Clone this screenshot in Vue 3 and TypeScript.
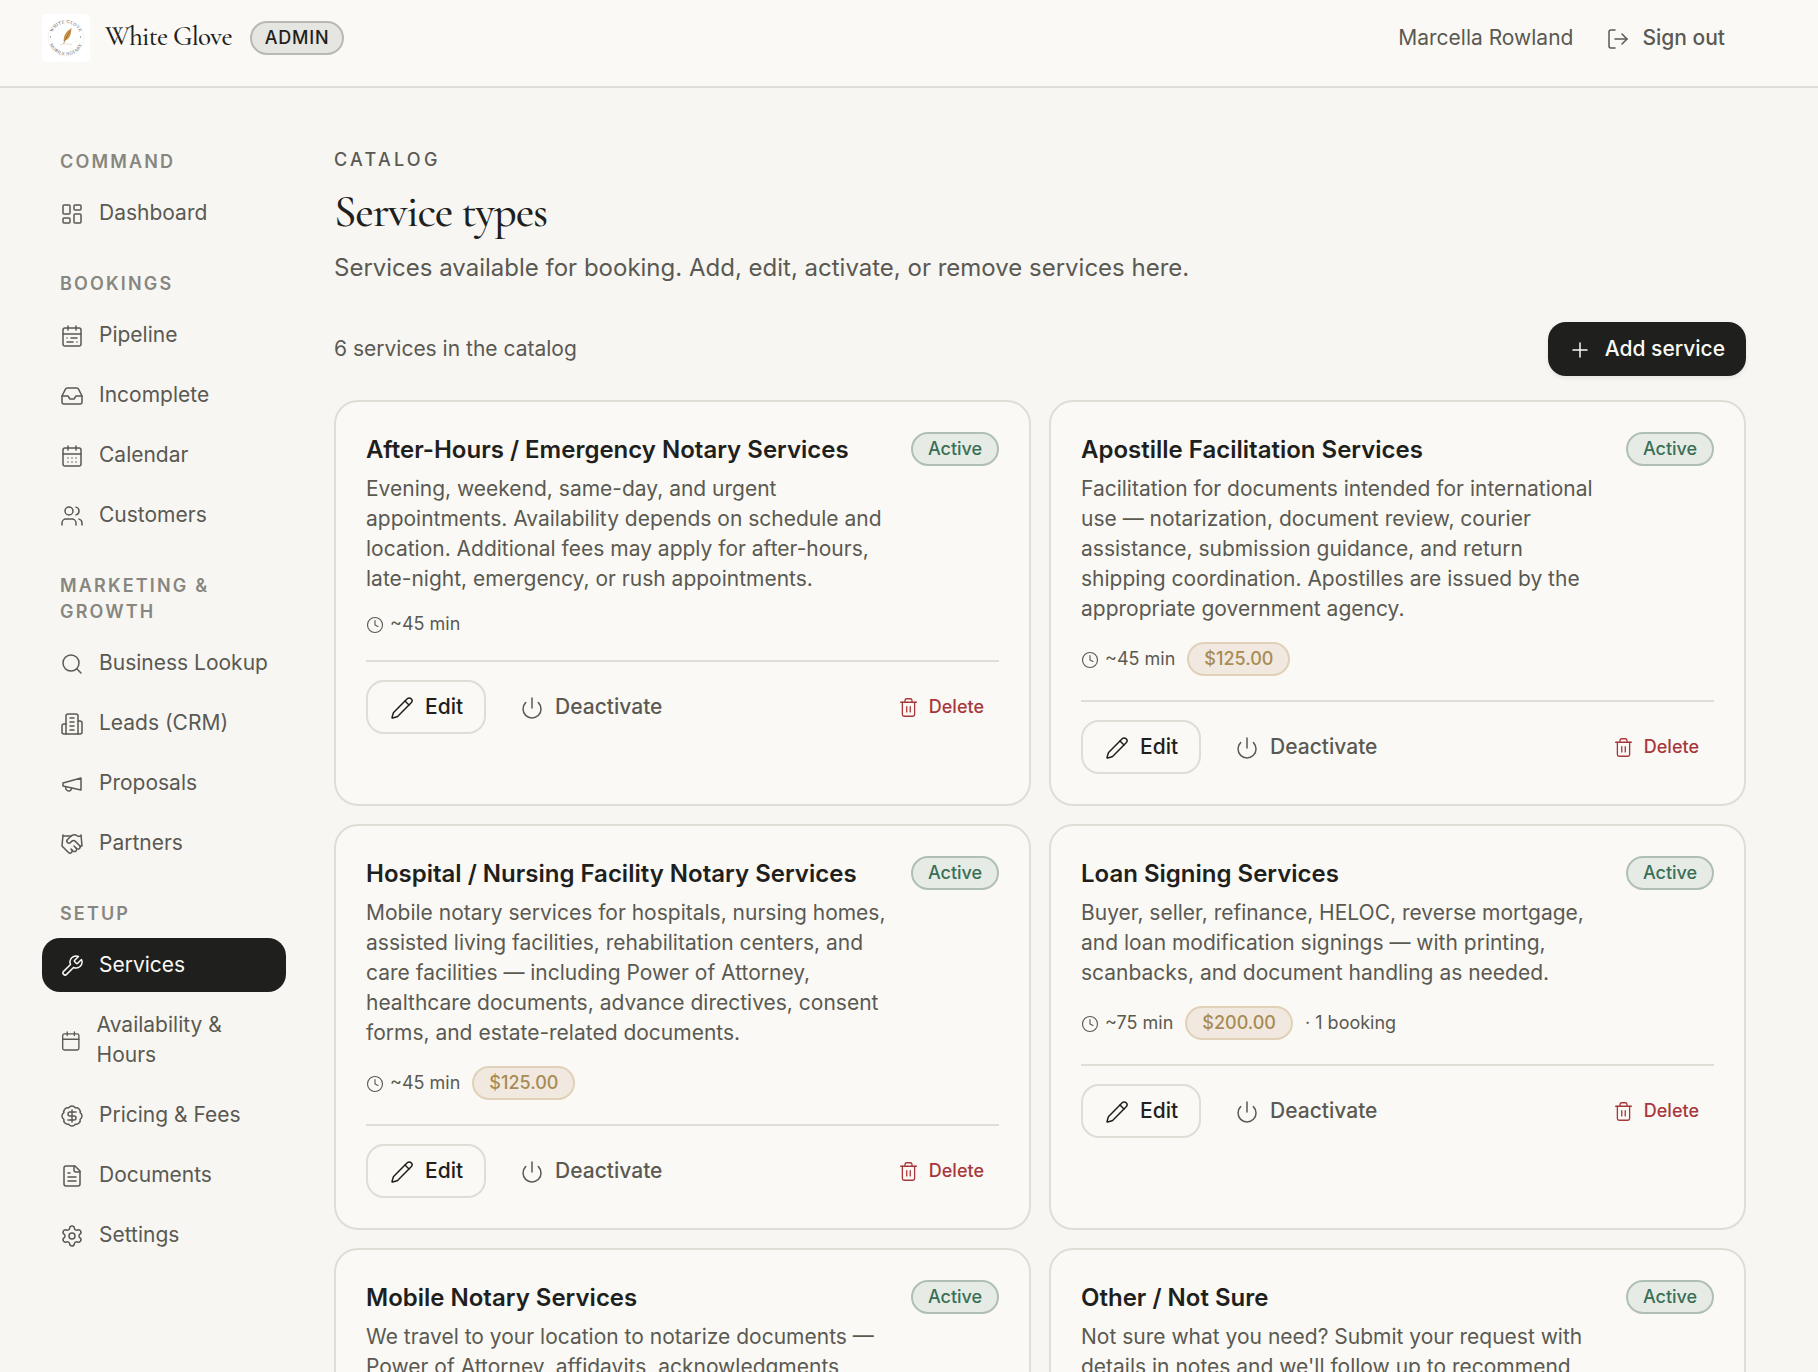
<script setup lang="ts">
interface NavItem {
  label: string
  icon: string
  active?: boolean
}
interface NavGroup {
  title: string
  items: NavItem[]
}
interface Service {
  name: string
  description: string
  duration: string
  price?: string
  bookings?: string
}

const calendarFrame =
  '<path d="M8 2v4"/><path d="M16 2v4"/><rect width="18" height="18" x="3" y="4" rx="2"/><path d="M3 10h18"/>'

const icons: Record<string, string> = {
  dashboard:
    '<rect width="7" height="9" x="3" y="3" rx="1"/><rect width="7" height="5" x="14" y="3" rx="1"/><rect width="7" height="9" x="14" y="12" rx="1"/><rect width="7" height="5" x="3" y="16" rx="1"/>',
  pipeline:
    calendarFrame + '<path d="M17 14h-6"/><path d="M13 18H7"/><path d="M7 14h.01"/><path d="M17 18h.01"/>',
  inbox:
    '<polyline points="22 12 16 12 14 15 10 15 8 12 2 12"/><path d="M5.45 5.11 2 12v6a2 2 0 0 0 2 2h16a2 2 0 0 0 2-2v-6l-3.45-6.89A2 2 0 0 0 16.76 4H7.24a2 2 0 0 0-1.79 1.11z"/>',
  calendarDays:
    calendarFrame +
    '<path d="M8 14h.01"/><path d="M12 14h.01"/><path d="M16 14h.01"/><path d="M8 18h.01"/><path d="M12 18h.01"/><path d="M16 18h.01"/>',
  calendar: calendarFrame,
  users:
    '<path d="M16 21v-2a4 4 0 0 0-4-4H6a4 4 0 0 0-4 4v2"/><circle cx="9" cy="7" r="4"/><path d="M22 21v-2a4 4 0 0 0-3-3.87"/><path d="M16 3.13a4 4 0 0 1 0 7.75"/>',
  search: '<circle cx="11" cy="11" r="8"/><path d="m21 21-4.3-4.3"/>',
  building:
    '<path d="M6 22V4a2 2 0 0 1 2-2h8a2 2 0 0 1 2 2v18Z"/><path d="M6 12H4a2 2 0 0 0-2 2v6a2 2 0 0 0 2 2h2"/><path d="M18 9h2a2 2 0 0 1 2 2v9a2 2 0 0 1-2 2h-2"/><path d="M10 6h4"/><path d="M10 10h4"/><path d="M10 14h4"/><path d="M10 18h4"/>',
  megaphone: '<path d="m3 11 18-5v12L3 14v-3z"/><path d="M11.6 16.8a3 3 0 1 1-5.8-1.6"/>',
  handshake:
    '<path d="m11 17 2 2a1 1 0 1 0 3-3"/><path d="m14 14 2.5 2.5a1 1 0 1 0 3-3l-3.88-3.88a3 3 0 0 0-4.24 0l-.88.88a1 1 0 1 1-3-3l2.81-2.81a5.79 5.79 0 0 1 7.06-.87l.47.28a2 2 0 0 0 1.42.25L21 4"/><path d="m21 3 1 11h-2"/><path d="M3 3 2 14l6.5 6.5a1 1 0 1 0 3-3"/><path d="M3 4h8"/>',
  wrench:
    '<path d="M14.7 6.3a1 1 0 0 0 0 1.4l1.6 1.6a1 1 0 0 0 1.4 0l3.77-3.77a6 6 0 0 1-7.94 7.94l-6.91 6.91a2.12 2.12 0 0 1-3-3l6.91-6.91a6 6 0 0 1 7.94-7.94l-3.76 3.76z"/>',
  dollar:
    '<path d="M3.85 8.62a4 4 0 0 1 4.78-4.77 4 4 0 0 1 6.74 0 4 4 0 0 1 4.78 4.78 4 4 0 0 1 0 6.74 4 4 0 0 1-4.77 4.78 4 4 0 0 1-6.75 0 4 4 0 0 1-4.78-4.77 4 4 0 0 1 0-6.76Z"/><path d="M16 8h-6a2 2 0 1 0 0 4h4a2 2 0 1 1 0 4H8"/><path d="M12 18V6"/>',
  file:
    '<path d="M15 2H6a2 2 0 0 0-2 2v16a2 2 0 0 0 2 2h12a2 2 0 0 0 2-2V7Z"/><path d="M14 2v4a2 2 0 0 0 2 2h4"/><path d="M10 9H8"/><path d="M16 13H8"/><path d="M16 17H8"/>',
  settings:
    '<path d="M9.671 4.136a2.34 2.34 0 0 1 4.659 0 2.34 2.34 0 0 0 3.319 1.915 2.34 2.34 0 0 1 2.33 4.033 2.34 2.34 0 0 0 0 3.831 2.34 2.34 0 0 1-2.33 4.033 2.34 2.34 0 0 0-3.319 1.915 2.34 2.34 0 0 1-4.659 0 2.34 2.34 0 0 0-3.32-1.915 2.34 2.34 0 0 1-2.33-4.033 2.34 2.34 0 0 0 0-3.831A2.34 2.34 0 0 1 6.35 6.051a2.34 2.34 0 0 0 3.319-1.915"/><circle cx="12" cy="12" r="3"/>',
  logout:
    '<path d="M9 21H5a2 2 0 0 1-2-2V5a2 2 0 0 1 2-2h4"/><path d="m16 17 5-5-5-5"/><path d="M21 12H9"/>',
  plus: '<path d="M5 12h14"/><path d="M12 5v14"/>',
  clock: '<circle cx="12" cy="12" r="10"/><path d="M12 6v6l4 2"/>',
  pencil:
    '<path d="M21.174 6.812a1 1 0 0 0-3.986-3.987L3.842 16.174a2 2 0 0 0-.5.83l-1.321 4.352a.5.5 0 0 0 .623.622l4.353-1.32a2 2 0 0 0 .83-.497z"/><path d="m15 5 4 4"/>',
  power: '<path d="M12 2v10"/><path d="M18.4 6.6a9 9 0 1 1-12.77.04"/>',
  trash:
    '<path d="M3 6h18"/><path d="M19 6v14a2 2 0 0 1-2 2H7a2 2 0 0 1-2-2V6"/><path d="M8 6V4a2 2 0 0 1 2-2h4a2 2 0 0 1 2 2v2"/><path d="M10 11v6"/><path d="M14 11v6"/>',
}

const nav: NavGroup[] = [
  { title: 'Command', items: [{ label: 'Dashboard', icon: 'dashboard' }] },
  {
    title: 'Bookings',
    items: [
      { label: 'Pipeline', icon: 'pipeline' },
      { label: 'Incomplete', icon: 'inbox' },
      { label: 'Calendar', icon: 'calendarDays' },
      { label: 'Customers', icon: 'users' },
    ],
  },
  {
    title: 'Marketing & Growth',
    items: [
      { label: 'Business Lookup', icon: 'search' },
      { label: 'Leads (CRM)', icon: 'building' },
      { label: 'Proposals', icon: 'megaphone' },
      { label: 'Partners', icon: 'handshake' },
    ],
  },
  {
    title: 'Setup',
    items: [
      { label: 'Services', icon: 'wrench', active: true },
      { label: 'Availability & Hours', icon: 'calendar' },
      { label: 'Pricing & Fees', icon: 'dollar' },
      { label: 'Documents', icon: 'file' },
      { label: 'Settings', icon: 'settings' },
    ],
  },
]

const services: Service[] = [
  {
    name: 'After-Hours / Emergency Notary Services',
    description:
      'Evening, weekend, same-day, and urgent appointments. Availability depends on schedule and location. Additional fees may apply for after-hours, late-night, emergency, or rush appointments.',
    duration: '~45 min',
  },
  {
    name: 'Apostille Facilitation Services',
    description:
      'Facilitation for documents intended for international use — notarization, document review, courier assistance, submission guidance, and return shipping coordination. Apostilles are issued by the appropriate government agency.',
    duration: '~45 min',
    price: '$125.00',
  },
  {
    name: 'Hospital / Nursing Facility Notary Services',
    description:
      'Mobile notary services for hospitals, nursing homes, assisted living facilities, rehabilitation centers, and care facilities — including Power of Attorney, healthcare documents, advance directives, consent forms, and estate-related documents.',
    duration: '~45 min',
    price: '$125.00',
  },
  {
    name: 'Loan Signing Services',
    description:
      'Buyer, seller, refinance, HELOC, reverse mortgage, and loan modification signings — with printing, scanbacks, and document handling as needed.',
    duration: '~75 min',
    price: '$200.00',
    bookings: '1 booking',
  },
  {
    name: 'Mobile Notary Services',
    description:
      'We travel to your location to notarize documents — Power of Attorney, affidavits, acknowledgments, and more.',
    duration: '~45 min',
  },
  {
    name: 'Other / Not Sure',
    description:
      "Not sure what you need? Submit your request with details in notes and we'll follow up to recommend the right service.",
    duration: '~45 min',
  },
]
</script>

<template>
  <div class="page">
    <header class="topbar">
      <div class="brand">
        <svg class="logo" viewBox="0 0 48 48" aria-hidden="true">
          <defs>
            <path id="logo-arc-top" d="M9.2 24a14.8 14.8 0 0 1 29.6 0" />
            <path id="logo-arc-bottom" d="M6.8 24a17.2 17.2 0 0 0 34.4 0" />
          </defs>
          <circle cx="24" cy="24" r="17.8" fill="none" stroke="#dedcd8" stroke-width=".4" />
          <text class="logo-text"><textPath href="#logo-arc-top" startOffset="50%">WHITE GLOVE</textPath></text>
          <text class="logo-text"><textPath href="#logo-arc-bottom" startOffset="50%">MOBILE NOTARY</textPath></text>
          <circle cx="8.5" cy="23" r=".7" fill="#8a8478" />
          <circle cx="38.5" cy="23" r=".7" fill="#8a8478" />
          <path d="M29.8 14.200c-4.200 2-7.400 5.600-7.900 9.800l-.4 3.200c3.400-.8 6.200-3 7-6.400.5-2.200.5-4.400 1.300-6.600z" fill="#c8944a" />
          <path d="M28.600 17c-2.600 3.400-4.800 7.200-7 12.600" fill="none" stroke="#7a5a2c" stroke-width=".6" />
          <path d="M18 30.600c3-.8 8-.9 12-.1" fill="none" stroke="#d9cba8" stroke-width=".6" />
        </svg>
        <span class="brand-name">White Glove</span>
        <span class="role">ADMIN</span>
      </div>
      <div class="account">
        <span class="user">Marcella Rowland</span>
        <button class="btn signout">
          <svg class="icon" viewBox="0 0 24 24" v-html="icons.logout"></svg>
          <span>Sign out</span>
        </button>
      </div>
    </header>

    <div class="body">
      <aside class="sidebar">
        <nav v-for="group in nav" :key="group.title" class="group">
          <h2 class="group-title">{{ group.title }}</h2>
          <a v-for="item in group.items" :key="item.label" class="nav-item" :class="{ active: item.active }">
            <svg class="nav-icon" viewBox="0 0 24 24" v-html="icons[item.icon]"></svg>
            <span class="nav-label">{{ item.label }}</span>
          </a>
        </nav>
      </aside>

      <main class="main">
        <p class="eyebrow">CATALOG</p>
        <h1 class="title">Service types</h1>
        <p class="subtitle">Services available for booking. Add, edit, activate, or remove services here.</p>

        <div class="toolbar">
          <span class="count">6 services in the catalog</span>
          <button class="btn add">
            <svg class="icon" viewBox="0 0 24 24" v-html="icons.plus"></svg>
            <span>Add service</span>
          </button>
        </div>

        <div class="grid">
          <article v-for="s in services" :key="s.name" class="card">
            <div class="card-head">
              <div class="card-text">
                <h3 class="card-title">{{ s.name }}</h3>
                <p class="card-desc">{{ s.description }}</p>
              </div>
              <span class="pill status">Active</span>
            </div>
            <div class="meta">
              <span class="duration">
                <svg class="icon clock" viewBox="0 0 24 24" v-html="icons.clock"></svg>
                <span>{{ s.duration }}</span>
              </span>
              <span v-if="s.price" class="pill price">{{ s.price }}</span>
              <span v-if="s.bookings" class="bookings">· {{ s.bookings }}</span>
            </div>
            <div class="actions">
              <button class="btn edit">
                <svg class="icon" viewBox="0 0 24 24" v-html="icons.pencil"></svg>
                <span>Edit</span>
              </button>
              <button class="btn deactivate">
                <svg class="icon" viewBox="0 0 24 24" v-html="icons.power"></svg>
                <span>Deactivate</span>
              </button>
              <button class="btn delete">
                <svg class="icon" viewBox="0 0 24 24" v-html="icons.trash"></svg>
                <span>Delete</span>
              </button>
            </div>
          </article>
        </div>
      </main>
    </div>
  </div>
</template>

<style>
body {
  margin: 0;
  background: #f7f6f2;
}
</style>

<style scoped>
.page {
  box-sizing: border-box;
  height: 1372px;
  overflow: hidden;
  background: #f7f6f2;
  color: #5a5952;
  font-family: Inter, 'Liberation Sans', sans-serif;
  font-size: 21px;
  line-height: 30px;
}
.page *,
.page *::before {
  box-sizing: border-box;
}
h1,
h2,
h3,
p {
  margin: 0;
}
.topbar {
  display: flex;
  justify-content: space-between;
  align-items: flex-start;
  height: 88px;
  padding: 11px 72px 0 42px;
  border-bottom: 2px solid #deddd8;
  background: #faf9f5;
}
.brand {
  display: flex;
  align-items: center;
  height: 54px;
}
.logo {
  width: 48px;
  height: 48px;
  border-radius: 4px;
  background: #fff;
}
.logo-text {
  font-family: 'Liberation Serif', serif;
  font-size: 4.4px;
  font-weight: 500;
  letter-spacing: 0.4px;
  text-anchor: middle;
  fill: #55524c;
}
.brand-name {
  margin: 0 18px 2px 15px;
  width: 127px;
  white-space: nowrap;
  font-family: 'Cormorant Garamond', 'Liberation Serif', serif;
  font-size: 27px;
  font-weight: 500;
  letter-spacing: -0.72px;
  color: #1f1f1d;
}
.role {
  display: flex;
  align-items: center;
  justify-content: center;
  width: 94px;
  height: 34px;
  border: 2px solid #b9b8b4;
  border-radius: 17px;
  background: #e5e5e1;
  color: #1f1f1d;
  font-size: 18px;
  font-weight: 500;
  letter-spacing: 0.8px;
}
.account {
  display: flex;
  align-items: center;
  height: 54px;
}
.btn {
  display: flex;
  align-items: center;
  gap: 12px;
  height: 54px;
  padding: 0 22px;
  border: 0;
  border-radius: 18px;
  background: none;
  color: inherit;
  font: inherit;
  font-weight: 500;
  white-space: nowrap;
}
.signout {
  margin-left: 11px;
  padding: 0 21px 0 22px;
}
.icon,
.nav-icon {
  width: 24px;
  height: 24px;
  fill: none;
  stroke: currentColor;
  stroke-width: 1.5;
  stroke-linecap: round;
  stroke-linejoin: round;
}
.icon {
  flex: none;
  margin-top: 2px;
}
.body {
  display: flex;
  gap: 48px;
  padding: 60px 72px 0 42px;
}
.sidebar {
  flex: none;
  display: flex;
  flex-direction: column;
  gap: 30px;
  width: 244px;
}
.group {
  display: flex;
  flex-direction: column;
  gap: 6px;
}
.group-title {
  position: relative;
  top: 1px;
  margin-bottom: 6px;
  padding: 0 18px;
  color: #878680;
  font-size: 18px;
  font-weight: 600;
  line-height: 26px;
  letter-spacing: 2.16px;
  text-transform: uppercase;
}
.nav-item {
  display: flex;
  align-items: center;
  gap: 15px;
  padding: 12px 18px;
  border-radius: 18px;
}
.nav-item.active {
  background: #1f1f1e;
  color: #faf9f5;
}
.nav-icon {
  position: relative;
  top: 1px;
}
.main {
  flex: 1;
  min-width: 0;
}
.eyebrow {
  margin-top: -1px;
  font-size: 18px;
  font-weight: 500;
  line-height: 26px;
  letter-spacing: 3.24px;
}
.title {
  margin-top: 13px;
  font-family: 'Cormorant Garamond', 'Liberation Serif', serif;
  font-size: 45px;
  font-weight: 500;
  line-height: 52px;
  letter-spacing: -1.16px;
  color: #1f1f1d;
}
.subtitle {
  margin-top: 11px;
  font-size: 24px;
  line-height: 38px;
}
.toolbar {
  display: flex;
  align-items: center;
  justify-content: space-between;
  height: 54px;
  margin-top: 35px;
}
.add {
  gap: 13px;
  padding: 0 21px 0 20px;
  background: #1f1f1e;
  color: #faf9f5;
  box-shadow: 0 2px 4px rgba(30, 30, 20, 0.08);
}
.grid {
  display: grid;
  grid-template-columns: 1fr 1fr;
  gap: 18px;
  margin-top: 24px;
}
.card {
  padding: 30px;
  border: 2px solid #deddd6;
  border-radius: 24px;
  background: #faf9f5;
}
.card-head {
  display: flex;
  align-items: flex-start;
  gap: 24px;
}
.card-text {
  flex: 1;
  min-width: 0;
}
.card-title {
  color: #1f1f1d;
  font-size: 24px;
  font-weight: 600;
  line-height: 36px;
}
.card-desc {
  margin-top: 6px;
}
.pill {
  display: flex;
  align-items: center;
  justify-content: center;
  flex: none;
  height: 34px;
  border: 2px solid;
  border-radius: 17px;
  font-size: 18px;
  font-weight: 500;
}
.status {
  width: 88px;
  border-color: #b0bfb6;
  background: #e6ebe5;
  color: #3a6f56;
}
.price {
  padding: 0 15px;
  border-color: #e0d1b8;
  background: #f1e9df;
  color: #a88b55;
}
.meta {
  display: flex;
  align-items: center;
  gap: 12px;
  margin-top: 18px;
  font-size: 18px;
  line-height: 24px;
}
.duration {
  display: flex;
  align-items: center;
  gap: 6px;
}
.clock {
  width: 18px;
  height: 18px;
}
.actions {
  display: flex;
  align-items: center;
  margin-top: 24px;
  padding-top: 18px;
  border-top: 2px solid #deddd6;
}
.edit {
  gap: 11px;
  padding: 0 21px 0 22px;
  border: 2px solid #deddd6;
  color: #1f1f1d;
}
.deactivate {
  gap: 11px;
  margin-left: 12px;
}
.delete {
  gap: 10px;
  margin-left: auto;
  padding: 0 15px;
  color: #a8373c;
  font-size: 18px;
}
.delete .icon {
  width: 21px;
  height: 21px;
  margin-top: 0;
}
</style>
